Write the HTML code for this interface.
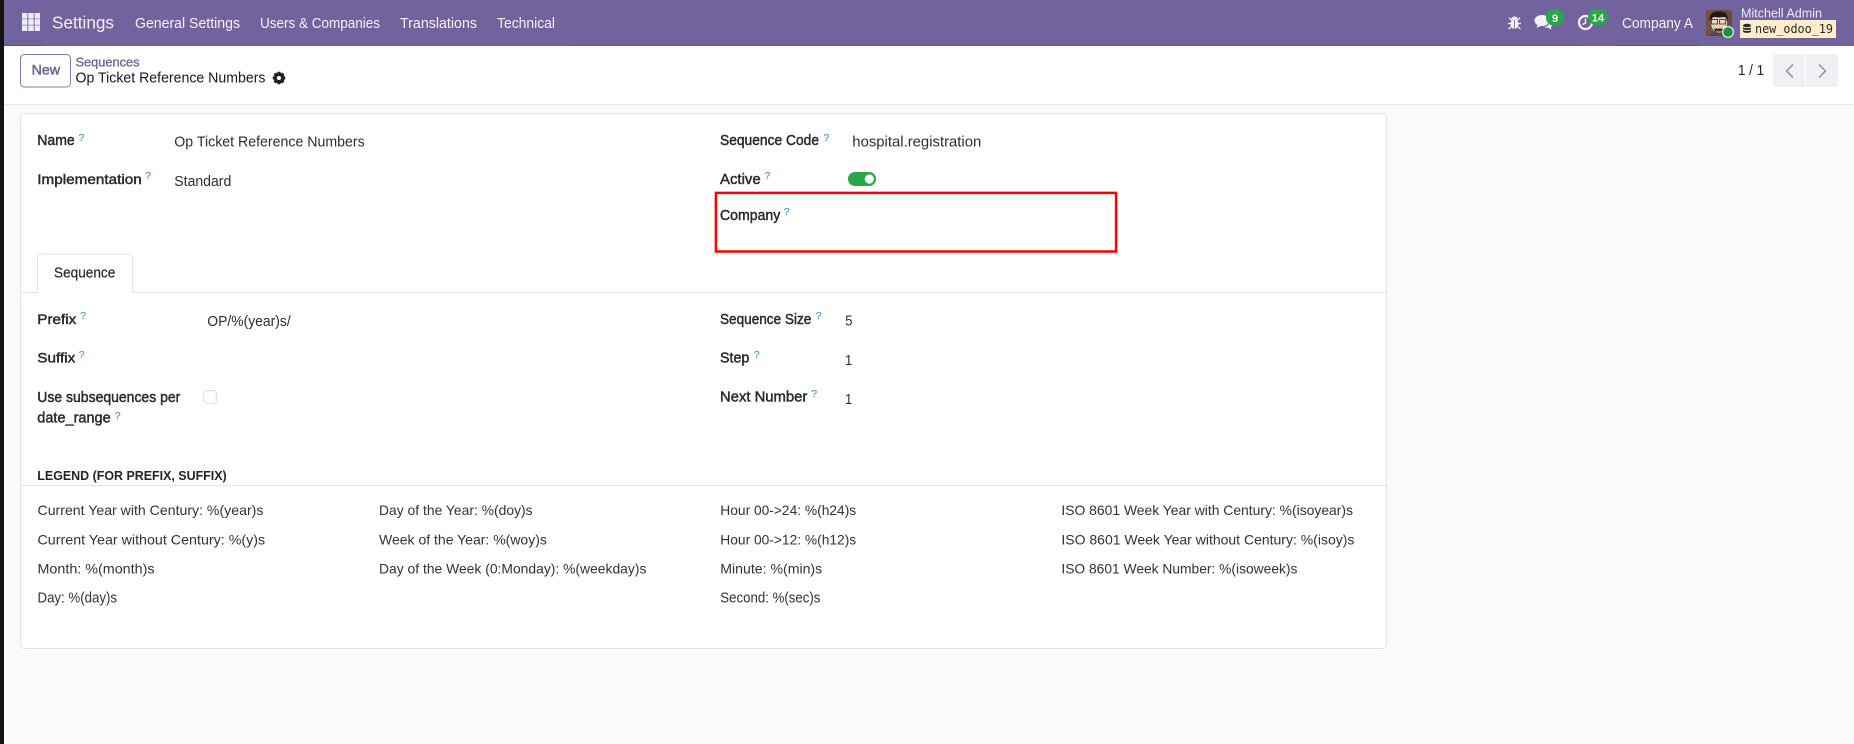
<!DOCTYPE html>
<html lang="en">
<head>
<meta charset="utf-8">
<title>Settings</title>
<style>
html,body{margin:0;padding:0;width:1854px;height:744px;overflow:hidden;background:#f9fafb}
svg{display:block;position:absolute;left:0;top:0}
text{font-family:"Liberation Sans",sans-serif;font-size:14.5px;fill:#212529;white-space:pre}
.n{fill:#f4f2f8;font-size:14.5px}
.l{fill:#262a30;stroke:#262a30;stroke-width:.45px}
.v{fill:#2a2e34}
.q{fill:#5b9bd5;font-size:10.5px;stroke:#5b9bd5;stroke-width:.2px}
.b{fill:#fff;font-size:11px;font-weight:bold}
.s{font-size:14px;fill:#2f3338}
</style>
</head>
<body>
<svg width="1854" height="744" viewBox="0 0 1854 744" xmlns="http://www.w3.org/2000/svg">
<rect width="1854" height="744" fill="#f9fafb"/>
<!-- control panel -->
<rect x="4" y="46" width="1850" height="58" fill="#fff"/>
<rect x="4" y="104" width="1850" height="1" fill="#e3e6ea"/>
<!-- navbar -->
<rect x="4" y="0" width="1850" height="46" fill="#71639e"/>
<rect x="4" y="45" width="40" height="1" fill="#5f5386"/>
<rect x="570" y="45" width="1010" height="1" fill="#665a8f"/>
<rect x="1616" y="45" width="84" height="1" fill="#5f5386"/>
<!-- left strip -->
<rect x="0" y="0" width="4" height="744" fill="#131313"/>

<!-- apps icon -->
<g fill="#eeebf5">
<rect x="22" y="13" width="5.4" height="5.6"/><rect x="28.300" y="13" width="5.4" height="5.6"/><rect x="34.600" y="13" width="5.4" height="5.6"/>
<rect x="22" y="19.200" width="5.4" height="5.6"/><rect x="28.300" y="19.200" width="5.4" height="5.6"/><rect x="34.600" y="19.200" width="5.4" height="5.6"/>
<rect x="22" y="25.400" width="5.4" height="5.6"/><rect x="28.300" y="25.400" width="5.4" height="5.6"/><rect x="34.600" y="25.400" width="5.4" height="5.6"/>
</g>
<text x="52" y="28.5" class="n" style="font-size:17.5px" textLength="62" lengthAdjust="spacingAndGlyphs">Settings</text>
<text x="135" y="28" class="n" textLength="105" lengthAdjust="spacingAndGlyphs">General Settings</text>
<text x="260" y="28" class="n" textLength="120" lengthAdjust="spacingAndGlyphs">Users &amp; Companies</text>
<text x="400" y="28" class="n" textLength="77" lengthAdjust="spacingAndGlyphs">Translations</text>
<text x="497" y="28" class="n" textLength="58" lengthAdjust="spacingAndGlyphs">Technical</text>

<!-- bug -->
<g fill="#f4f2f8">
<ellipse cx="1514.5" cy="24" rx="4" ry="5"/>
<path d="M1511 19.5a3.5 3 0 0 1 7 0z"/>
</g>
<path d="M1509 17.5l2.5 3M1520 17.5l-2.5 3M1508 23.5h13M1508.5 29l3-2.5M1520.5 29l-3-2.5" stroke="#f4f2f8" stroke-width="1.2" fill="none"/>
<path d="M1514.5 20v9" stroke="#71639e" stroke-width=".8"/>
<!-- chat -->
<path d="M1542 15c4.500 0 7.500 2.500 7.500 5.500s-3 5.500-7.500 5.500l-1.500 0-4 2 1-3c-2-1-3-2.800-3-4.500 0-3 3-5.500 7.500-5.500z" fill="#f4f2f8"/>
<path d="M1550 21c1.800.7 2.500 2 2.500 3.200 0 1.200-.7 2.200-1.700 2.800l.7 2.500-3.500-1.800-4.500-.3c3-.5 6.500-2.500 6.500-6.400z" fill="#f4f2f8"/>
<rect x="1546" y="9" width="18" height="17" rx="8.5" fill="#28a745"/>
<text x="1555" y="22" class="b" text-anchor="middle">9</text>
<!-- clock -->
<circle cx="1585.500" cy="22.500" r="6.500" fill="none" stroke="#f4f2f8" stroke-width="2.200"/>
<path d="M1585.500 18.500v4.500l-3 1.500" fill="none" stroke="#f4f2f8" stroke-width="1.500"/>
<rect x="1588" y="9" width="20" height="16" rx="8" fill="#28a745"/>
<text x="1598" y="21.500" class="b" text-anchor="middle">14</text>
<text x="1622" y="28" class="n" textLength="71" lengthAdjust="spacingAndGlyphs">Company A</text>

<!-- avatar -->
<rect x="1706" y="10" width="26" height="26" rx="3" fill="#6b4a44"/>
<rect x="1706" y="10" width="8" height="26" fill="#7a4f43"/>
<ellipse cx="1719" cy="23" rx="8" ry="9.500" fill="#ecd2b8"/>
<path d="M1709.500 21c-.5-8 4-9.500 9.500-9.500s10 2 8.500 9.500l-2-4-6 .5-6-.5z" fill="#1d1a1c"/>
<rect x="1711.500" y="19.500" width="6" height="4.500" fill="none" stroke="#4a4a50" stroke-width="1"/>
<rect x="1719.500" y="19.500" width="6" height="4.500" fill="none" stroke="#4a4a50" stroke-width="1"/>
<path d="M1714 28.500h9.500l-1 3h-7.500z" fill="#3a3434"/>
<path d="M1709 36c1.500-3 4-4 5-4l5 2 5-2c1 0 2 1 3 4z" fill="#564844"/>
<circle cx="1728" cy="32" r="6" fill="#e9f2ec"/>
<circle cx="1728" cy="32" r="4.800" fill="#1f8f3f"/>
<text x="1741" y="17.500" class="n" style="font-size:12.500px;fill:#efecf6" textLength="81" lengthAdjust="spacingAndGlyphs">Mitchell Admin</text>
<rect x="1740" y="20" width="96" height="18" fill="#fdeecb"/>
<g fill="#2b2b2b">
<ellipse cx="1747" cy="25.500" rx="4" ry="1.800"/>
<path d="M1743 27.200c1 1.300 7 1.300 8 0v1.800c-1 1.300-7 1.300-8 0z"/>
<path d="M1743 30c1 1.300 7 1.300 8 0v1.800c-1 1.500-7 1.500-8 0z"/>
</g>
<text x="1755" y="33" style="font-family:'DejaVu Sans Mono',monospace;font-size:12px;fill:#2a2a2a" textLength="78" lengthAdjust="spacingAndGlyphs">new_odoo_19</text>

<!-- control panel contents -->
<rect x="20.500" y="54.500" width="50" height="32.500" rx="4" fill="#fff" stroke="#8478ac" stroke-width="1"/>
<text x="31.600" y="74.700" style="fill:#71639e;font-size:14px;stroke:#71639e;stroke-width:.5px" textLength="28.500" lengthAdjust="spacingAndGlyphs">New</text>
<text x="75.500" y="66.700" style="fill:#71639e;font-size:12.500px;stroke:#71639e;stroke-width:.35px" textLength="64" lengthAdjust="spacingAndGlyphs">Sequences</text>
<text x="75.500" y="82.700" style="fill:#111827;font-size:14.500px" textLength="190" lengthAdjust="spacingAndGlyphs">Op Ticket Reference Numbers</text>
<!-- gear -->
<g transform="translate(279,78)">
<circle r="3.800" fill="none" stroke="#212529" stroke-width="3.600"/>
<g fill="#212529">
<rect x="-1.300" y="-6.300" width="2.600" height="2.600"/>
<rect x="-1.300" y="3.700" width="2.600" height="2.600"/>
<rect x="-6.300" y="-1.300" width="2.600" height="2.600"/>
<rect x="3.700" y="-1.300" width="2.600" height="2.600"/>
<rect x="-1.300" y="-6.300" width="2.600" height="2.600" transform="rotate(45)"/>
<rect x="-1.300" y="3.700" width="2.600" height="2.600" transform="rotate(45)"/>
<rect x="-6.300" y="-1.300" width="2.600" height="2.600" transform="rotate(45)"/>
<rect x="3.700" y="-1.300" width="2.600" height="2.600" transform="rotate(45)"/>
</g>
</g>
<!-- pager -->
<text x="1738" y="75" style="font-size:14.500px;fill:#212529" textLength="26" lengthAdjust="spacingAndGlyphs">1 / 1</text>
<rect x="1773" y="54" width="65" height="33" rx="3.500" fill="#eef0f4"/>
<rect x="1805" y="54" width="1" height="33" fill="#fff"/>
<path d="M1793 64.500l-6.500 6.500 6.500 6.500M1819 64.500l6.500 6.500-6.500 6.500" fill="none" stroke="#8a8796" stroke-width="1.300"/>

<!-- card -->
<rect x="20.500" y="113.500" width="1366" height="535" rx="4" fill="#fff" stroke="#e0e3e8" stroke-width="1"/>

<text x="37.300" y="145" class="l" textLength="37.400" lengthAdjust="spacingAndGlyphs">Name</text>
<text x="78.500" y="141" class="q">?</text>
<text x="174.300" y="146.700" class="v" textLength="190.400" lengthAdjust="spacingAndGlyphs">Op Ticket Reference Numbers</text>
<text x="37.300" y="184" class="l" style="font-size:14px" textLength="104.400" lengthAdjust="spacingAndGlyphs">Implementation</text>
<text x="145.200" y="179" class="q">?</text>
<text x="174.300" y="186" class="v" textLength="57" lengthAdjust="spacingAndGlyphs">Standard</text>

<text x="720" y="145" class="l" textLength="99" lengthAdjust="spacingAndGlyphs">Sequence Code</text>
<text x="823.500" y="141" class="q">?</text>
<text x="852.300" y="146.700" class="v" textLength="129" lengthAdjust="spacingAndGlyphs">hospital.registration</text>
<text x="720" y="184" class="l" textLength="40.700" lengthAdjust="spacingAndGlyphs">Active</text>
<text x="764.500" y="179" class="q">?</text>
<rect x="848" y="172" width="28" height="14" rx="7" fill="#28a745"/>
<circle cx="869.300" cy="179" r="4.600" fill="#fff"/>

<rect x="715.900" y="192.900" width="400.200" height="58.600" fill="none" stroke="#ff0000" stroke-width="2.500"/>
<text x="720" y="220" class="l" textLength="60.300" lengthAdjust="spacingAndGlyphs">Company</text>
<text x="783.800" y="215" class="q">?</text>

<!-- tabs -->
<rect x="21" y="292" width="1365" height="1" fill="#e0e3e8"/>
<path d="M37.500 293v-36a3 3 0 0 1 3-3h89a3 3 0 0 1 3 3v36" fill="#fff" stroke="#e0e3e8" stroke-width="1"/>
<rect x="38" y="291" width="94" height="3" fill="#fff"/>
<text x="54" y="277.700" style="font-size:14.500px;fill:#212529;stroke:#212529;stroke-width:.15px" textLength="61.300" lengthAdjust="spacingAndGlyphs">Sequence</text>

<text x="37.300" y="324" class="l" style="font-size:14px" textLength="39" lengthAdjust="spacingAndGlyphs">Prefix</text>
<text x="80.200" y="319" class="q">?</text>
<text x="207.300" y="326" class="v" textLength="83.400" lengthAdjust="spacingAndGlyphs">OP/%(year)s/</text>
<text x="37.300" y="362.700" class="l" style="font-size:14px" textLength="38" lengthAdjust="spacingAndGlyphs">Suffix</text>
<text x="78.800" y="358" class="q">?</text>
<text x="37.300" y="402" class="l" textLength="143" lengthAdjust="spacingAndGlyphs">Use subsequences per</text>
<text x="37.300" y="422.700" class="l" textLength="73.400" lengthAdjust="spacingAndGlyphs">date_range</text>
<text x="114.800" y="419" class="q">?</text>
<rect x="203.800" y="390.500" width="12.500" height="13" rx="2.500" fill="#fff" stroke="#d9dce1" stroke-width="1"/>

<text x="720" y="324" class="l" textLength="91.300" lengthAdjust="spacingAndGlyphs">Sequence Size</text>
<text x="815.800" y="319" class="q">?</text>
<text x="845.300" y="325.700" class="v" style="font-size:15px" textLength="7.200" lengthAdjust="spacingAndGlyphs">5</text>
<text x="720" y="362.700" class="l" textLength="29.300" lengthAdjust="spacingAndGlyphs">Step</text>
<text x="753.800" y="358" class="q">?</text>
<text x="845" y="365" class="v" style="font-size:15px" textLength="7.200" lengthAdjust="spacingAndGlyphs">1</text>
<text x="720" y="401.700" class="l" textLength="87.300" lengthAdjust="spacingAndGlyphs">Next Number</text>
<text x="811.200" y="397" class="q">?</text>
<text x="845" y="404" class="v" style="font-size:15px" textLength="7.200" lengthAdjust="spacingAndGlyphs">1</text>

<text x="37.300" y="480" style="font-size:12.500px;font-weight:bold;fill:#212529" textLength="189.400" lengthAdjust="spacingAndGlyphs">LEGEND (FOR PREFIX, SUFFIX)</text>
<rect x="21" y="485" width="1365" height="1" fill="#e0e3e8"/>

<text x="37.500" y="515" class="s" textLength="225.900" lengthAdjust="spacingAndGlyphs">Current Year with Century: %(year)s</text>
<text x="37.500" y="544.300" class="s" textLength="227.700" lengthAdjust="spacingAndGlyphs">Current Year without Century: %(y)s</text>
<text x="37.500" y="573.300" class="s" textLength="117" lengthAdjust="spacingAndGlyphs">Month: %(month)s</text>
<text x="37.500" y="602.700" class="s" style="font-size:14.500px" textLength="79.500" lengthAdjust="spacingAndGlyphs">Day: %(day)s</text>

<text x="379" y="515" class="s" textLength="153.600" lengthAdjust="spacingAndGlyphs">Day of the Year: %(doy)s</text>
<text x="379" y="544.300" class="s" textLength="167.900" lengthAdjust="spacingAndGlyphs">Week of the Year: %(woy)s</text>
<text x="379" y="573.300" class="s" textLength="267.400" lengthAdjust="spacingAndGlyphs">Day of the Week (0:Monday): %(weekday)s</text>

<text x="720.300" y="515" class="s" textLength="135.900" lengthAdjust="spacingAndGlyphs">Hour 00-&gt;24: %(h24)s</text>
<text x="720.300" y="544.300" class="s" textLength="135.900" lengthAdjust="spacingAndGlyphs">Hour 00-&gt;12: %(h12)s</text>
<text x="720.300" y="573.300" class="s" textLength="101.900" lengthAdjust="spacingAndGlyphs">Minute: %(min)s</text>
<text x="720.300" y="602.700" class="s" style="font-size:14.500px" textLength="100.100" lengthAdjust="spacingAndGlyphs">Second: %(sec)s</text>

<text x="1061.400" y="515" class="s" textLength="291.600" lengthAdjust="spacingAndGlyphs">ISO 8601 Week Year with Century: %(isoyear)s</text>
<text x="1061.400" y="544.300" class="s" textLength="293" lengthAdjust="spacingAndGlyphs">ISO 8601 Week Year without Century: %(isoy)s</text>
<text x="1061.400" y="573.300" class="s" textLength="236" lengthAdjust="spacingAndGlyphs">ISO 8601 Week Number: %(isoweek)s</text>
</svg>
</body>
</html>
